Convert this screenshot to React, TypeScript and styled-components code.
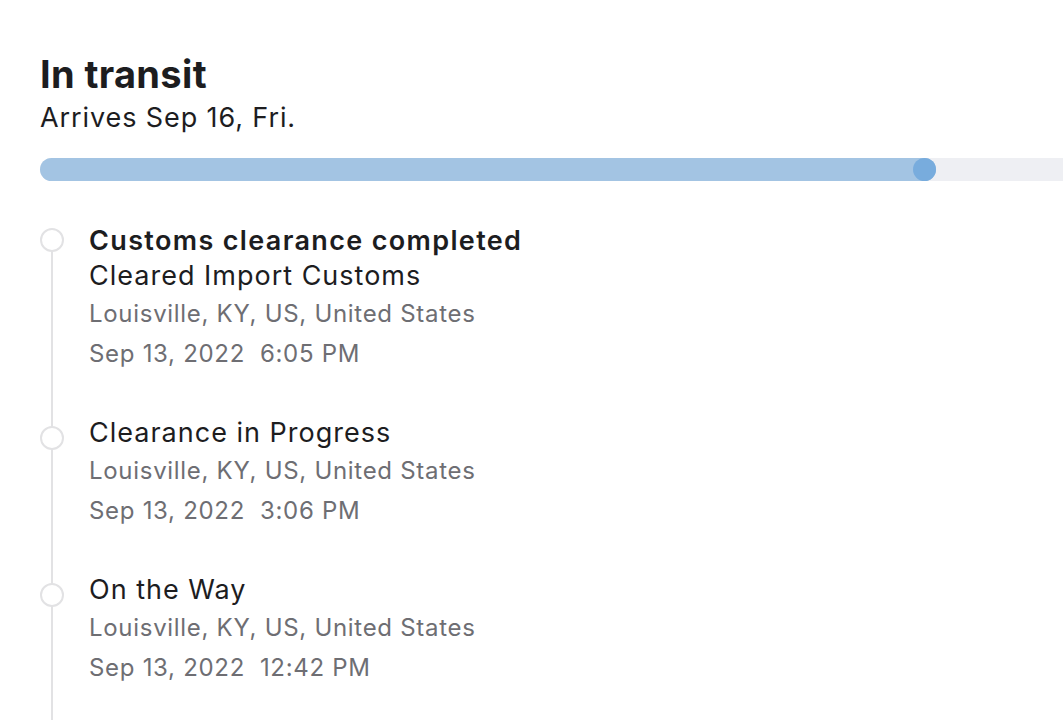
import React from 'react';
import styled, { createGlobalStyle } from 'styled-components';

type TrackEvent = {
	heading?: string;
	title: string;
	place: string;
	date: string;
	time: string;
};

const events: TrackEvent[] = [
	{
		heading: 'Customs clearance completed',
		title: 'Cleared Import Customs',
		place: 'Louisville, KY, US, United States',
		date: 'Sep 13, 2022',
		time: '6:05 PM',
	},
	{
		title: 'Clearance in Progress',
		place: 'Louisville, KY, US, United States',
		date: 'Sep 13, 2022',
		time: '3:06 PM',
	},
	{
		title: 'On the Way',
		place: 'Louisville, KY, US, United States',
		date: 'Sep 13, 2022',
		time: '12:42 PM',
	},
];

const GlobalStyle = createGlobalStyle`
	html, body {
		margin: 0;
		background: #ffffff;
		overflow: hidden;
	}

	body {
		font-family: Inter, "Noto Sans", "Liberation Sans", sans-serif;
		color: #1d1d1f;
	}
`;

export default function App() {
	// share of the track that is done
	const progress = 81.45;

	return (
		<>
			<GlobalStyle />
			<StyledPage>
				<Status>In transit</Status>
				<Arrival>Arrives Sep 16, Fri.</Arrival>

				<Track>
					<Fill style={{ width: `${progress}%` }}>
						<Knob />
					</Fill>
				</Track>

				<Timeline>
					{events.map(ev => (
						<EventRow key={ev.time}>
							<Marker $top={ev.heading ? 4 : 12} />
							<EventBody>
								{ev.heading && <EventHeading>{ev.heading}</EventHeading>}
								<EventTitle>{ev.title}</EventTitle>
								<EventMeta>{ev.place}</EventMeta>
								<EventMeta>
									{ev.date}
									{'\u00a0\u00a0'}
									{ev.time}
								</EventMeta>
							</EventBody>
						</EventRow>
					))}
				</Timeline>
			</StyledPage>
		</>
	);
}

const StyledPage = styled.main`
	padding: 52px 0 0 40px;
	height: 720px;
	box-sizing: border-box;
`;

const Status = styled.h1`
	margin: 0;
	font-size: 38px;
	font-weight: 700;
	line-height: 44px;
	letter-spacing: 0.35px;
	color: #1d1d1f;
`;

const Arrival = styled.p`
	margin: 0;
	font-size: 27px;
	line-height: 44px;
	letter-spacing: 0.9px;
	color: #1d1d1f;
`;

const Track = styled.div`
	margin-top: 18px;
	width: 1100px;
	height: 23px;
	border-radius: 12px;
	background: #eeeff3;
`;

const Fill = styled.div`
	height: 100%;
	border-radius: 12px;
	background: #a3c4e3;
	display: flex;
	justify-content: flex-end;
`;

const Knob = styled.span`
	width: 23px;
	height: 23px;
	border-radius: 50%;
	background: #78acdd;
`;

const Timeline = styled.ol`
	list-style: none;
	margin: 43px 0 0;
	padding: 0;
	display: flex;
	flex-direction: column;
	gap: 41px;
`;

const EventRow = styled.li`
	position: relative;
	display: flex;
	padding-left: 49px;

	&::before {
		content: '';
		position: absolute;
		left: 11px;
		top: 16px;
		bottom: -60px;
		width: 2px;
		background: #e2e2e4;
	}

	&:last-child::before {
		bottom: -200px;
	}
`;

const Marker = styled.span<{ $top: number }>`
	position: absolute;
	left: 0;
	top: ${p => p.$top}px;
	width: 20px;
	height: 20px;
	border: 2px solid #e2e2e4;
	border-radius: 50%;
	background: #ffffff;
	z-index: 1;
`;

const EventBody = styled.div`
	display: flex;
	flex-direction: column;
`;

const EventHeading = styled.div`
	font-size: 27px;
	font-weight: 600;
	line-height: 33px;
	letter-spacing: 1.35px;
	color: #1d1d1f;
`;

const EventTitle = styled.div`
	font-size: 27px;
	line-height: 37px;
	letter-spacing: 1px;
	color: #1d1d1f;
`;

const EventMeta = styled.div`
	font-size: 24px;
	line-height: 39px;
	letter-spacing: 0.7px;
	color: #6e6e73;

	& + & {
		margin-top: 1px;
	}
`;
